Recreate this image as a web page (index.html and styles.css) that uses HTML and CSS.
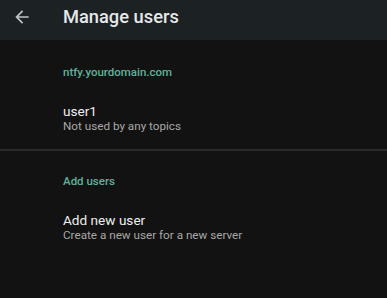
FILE: index.html
```html
<!DOCTYPE html>
<html lang="en">

<head>
    <meta charset="UTF-8">
    <title>Manage users</title>
    <link rel="stylesheet" href="styles.css">
</head>

<body>
    <div class="toolbar">
        <svg class="back" viewBox="0 0 24 24" width="20" height="20">
            <path d="M20 11H7.83l5.59-5.59L12 4l-8 8 8 8 1.41-1.41L7.83 13H20v-2z" fill="#bfc3c5"/>
        </svg>
        <h1>Manage users</h1>
    </div>

    <div class="section">
        <div class="section-title">ntfy.yourdomain.com</div>
        <div class="item">
            <div class="item-title">user1</div>
            <div class="item-summary">Not used by any topics</div>
        </div>
    </div>

    <div class="divider"></div>

    <div class="section">
        <div class="section-title">Add users</div>
        <div class="item">
            <div class="item-title">Add new user</div>
            <div class="item-summary">Create a new user for a new server</div>
        </div>
    </div>
</body>

</html>
```
FILE: styles.css
```css
body {
    margin: 0;
    background: #121212;
    font-family: Roboto, "Liberation Sans", sans-serif;
    color: #e8e8e8;
}

.toolbar {
    height: 40px;
    background: #1c2124;
    display: flex;
    align-items: center;
}

.toolbar .back {
    margin-left: 12px;
    margin-top: -7px;
}

.toolbar h1 {
    margin: -7px 0 0 31px;
    font-size: 18.3px;
    font-weight: 500;
    color: #e6e8e9;
}

.section {
    padding-left: 63px;
}

.section-title {
    color: #5cb39a;
    font-size: 11.5px;
    font-weight: 500;
    padding-top: 25px;
    height: 15px;
}

.divider + .section .section-title {
    padding-top: 23px;
}

.item {
    padding: 23px 0 15px;
}

.item-title {
    font-size: 13.6px;
    line-height: 17px;
    color: #eeeeee;
}

.item-summary {
    font-size: 11.7px;
    line-height: 15px;
    color: #a8a8a8;
    margin-top: -1px;
}

.divider {
    height: 2px;
    background: #2a2a2a;
}
```
